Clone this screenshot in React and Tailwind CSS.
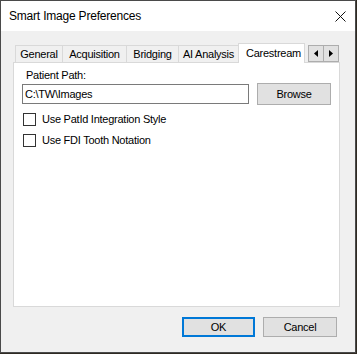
import React from "react";

const tabs = [
  { label: "General", w: "w-[47px]" },
  { label: "Acquisition", w: "w-[64px]" },
  { label: "Bridging", w: "w-[52px]" },
  { label: "AI Analysis", w: "w-[60px]" },
];

const font = { fontFamily: '"Liberation Sans", Arial, sans-serif' };

const Checkbox = ({ label }) => (
  <label className="flex items-center h-[13px]">
    <span className="w-[13px] h-[13px] border border-[#333333] bg-white" />
    <span className="ml-[6px] text-[11px] tracking-[-0.25px] text-black leading-none">{label}</span>
  </label>
);

const App = () => {
  return (
    <div className="w-[357px] h-[354px] bg-[#2f2a22]" style={font}>
      <div className="w-[356px] h-[353px] border border-[#4a4a4a] bg-[#f0f0f0] flex flex-col">
        {/* title bar */}
        <div className="h-[30px] bg-white flex items-center justify-between pl-[8px] pr-[9px]">
          <span className="text-[12px] tracking-[-0.2px] text-black">Smart Image Preferences</span>
          <svg width="11" height="11" viewBox="0 0 11 11">
            <path d="M0.5 0.5 L10.5 10.5 M10.5 0.5 L0.5 10.5" stroke="#111" strokeWidth="1" />
          </svg>
        </div>

        {/* body */}
        <div className="flex-1 flex flex-col pl-[12px] pt-[12px]">
          {/* tab strip */}
          <div className="w-[327px] h-[19px] flex items-end pl-[2px] relative z-10">
            {tabs.map((t) => (
              <div
                key={t.label}
                className={`${t.w} h-[17px] pt-[1px] border-l border-t border-[#d9d9d9] bg-[#f0f0f0] flex items-center justify-center text-[11px] tracking-[-0.25px] text-black`}
              >
                {t.label}
              </div>
            ))}
            <div className="w-[67px] h-[20px] -mb-px self-end border-l border-t border-r border-[#d9d9d9] bg-white flex items-center pl-[7px] text-[11px] tracking-[-0.25px] text-black">
              Carestream
            </div>
            <div className="ml-auto mr-[1px] self-start mt-[2px] flex border border-[#adadad] h-[17px]">
              <div className="w-[15px] bg-[#e1e1e1] border-r border-[#adadad] flex items-center justify-center">
                <svg width="4" height="7" viewBox="0 0 4 7"><path d="M4 0 L0 3.5 L4 7 Z" fill="#000" /></svg>
              </div>
              <div className="w-[14px] bg-[#e1e1e1] flex items-center justify-center">
                <svg width="4" height="7" viewBox="0 0 4 7"><path d="M0 0 L4 3.5 L0 7 Z" fill="#000" /></svg>
              </div>
            </div>
          </div>

          {/* panel */}
          <div className="w-[327px] h-[245px] border border-[#d9d9d9] bg-white pl-[8px] pt-[6px]">
            <div className="pl-[4px] text-[11px] tracking-[-0.25px] text-black leading-[13px]">Patient Path:</div>
            <div className="flex items-center mt-[1px]">
              <div className="w-[227px] h-[20px] pt-[1px] border border-[#7a7a7a] bg-white flex items-center pl-[2px] text-[11px] tracking-[-0.25px] text-black">
                C:\TW\Images
              </div>
              <button className="ml-[8px] w-[74px] h-[22px] border border-[#adadad] bg-[#e1e1e1] text-[11px] tracking-[-0.25px] text-black">
                Browse
              </button>
            </div>
            <div className="flex flex-col gap-[8px] mt-[8px] pl-[1px]">
              <Checkbox label="Use PatId Integration Style" />
              <Checkbox label="Use FDI Tooth Notation" />
            </div>
          </div>

          {/* buttons */}
          <div className="flex justify-end gap-[8px] pr-[18px] mt-[10px]">
            <button className="w-[73px] h-[20px] border-2 border-[#0078d7] bg-[#e1e1e1] text-[11px] tracking-[-0.25px] text-black">
              OK
            </button>
            <button className="w-[74px] h-[20px] border border-[#adadad] bg-[#e1e1e1] text-[11px] tracking-[-0.25px] text-black">
              Cancel
            </button>
          </div>
        </div>
      </div>
    </div>
  );
};

export default App;
